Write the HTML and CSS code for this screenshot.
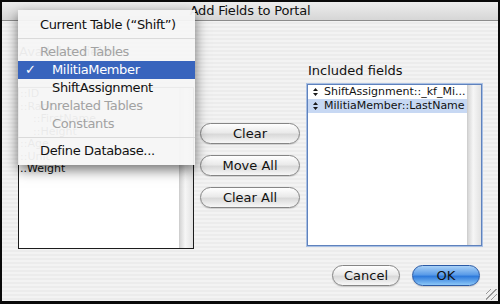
FILE: index.html
```html
<!DOCTYPE html>
<html lang="en">
<head>
    <meta charset="UTF-8">
    <title>Add Fields to Portal</title>
    <link rel="stylesheet" href="styles.css">
</head>
<body>
    <div class="window">
        <div class="titlebar">Add Fields to Portal</div>

        <div class="content">
            <div class="columns">
                <div class="col col-left">
                    <div class="label">Available fields</div>
                    <div class="popup">MilitiaMember</div>
                    <div class="list list-left">
                        <div class="list-rows">
                            <div class="row">::ID</div>
                            <div class="row">::Rank</div>
                            <div class="row indent">::FirstName</div>
                            <div class="row indent">::Height</div>
                            <div class="row">::Age</div>
                            <div class="row">::Unit</div>
                            <div class="row">..Weight</div>
                        </div>
                        <div class="scroll"></div>
                    </div>
                </div>

                <div class="col col-mid">
                    <button class="pill">Clear</button>
                    <button class="pill">Move All</button>
                    <button class="pill">Clear All</button>
                </div>

                <div class="col col-right">
                    <div class="label">Included fields</div>
                    <div class="list list-right">
                        <div class="list-rows">
                            <div class="row">
                                <svg class="updown" width="5" height="8" viewBox="0 0 5 8"><path d="M2.5 0 L5 3 L0 3 Z M0 5 L5 5 L2.5 8 Z" fill="#1a1a1a"/></svg>ShiftAssignment::_kf_Mi...
                            </div>
                            <div class="row selected">
                                <svg class="updown" width="5" height="8" viewBox="0 0 5 8"><path d="M2.5 0 L5 3 L0 3 Z M0 5 L5 5 L2.5 8 Z" fill="#1a1a1a"/></svg>MilitiaMember::LastName
                            </div>
                        </div>
                        <div class="scroll"></div>
                    </div>
                </div>
            </div>

            <div class="footer">
                <button class="pill pill-wide">Cancel</button>
                <button class="pill pill-wide default">OK</button>
            </div>
        </div>

        <div class="grip"></div>

        <!-- open table popup -->
        <div class="menu">
            <div class="item">Current Table (“Shift”)</div>
            <div class="sep"></div>
            <div class="item header">Related Tables</div>
            <div class="item sub active"><span class="check">✓</span>MilitiaMember</div>
            <div class="item sub">ShiftAssignment</div>
            <div class="item header">Unrelated Tables</div>
            <div class="item sub disabled">Constants</div>
            <div class="sep"></div>
            <div class="item">Define Database...</div>
        </div>
    </div>
</body>
</html>
```

FILE: styles.css
```css
* {
    margin: 0;
    padding: 0;
    box-sizing: border-box;
}

body {
    font-family: "DejaVu Sans", "Liberation Sans", sans-serif;
    font-size: 13px;
    color: #111;
    background: #000;
    width: 500px;
    height: 304px;
    overflow: hidden;
}

.window {
    position: relative;
    width: 500px;
    height: 304px;
    border: 2px solid #0a0a0a;
    border-bottom-width: 3px;
    background: repeating-linear-gradient(to bottom, #ececec 0, #ececec 2px, #f3f3f3 2px, #f3f3f3 4px);
    display: flex;
    flex-direction: column;
}

.titlebar {
    height: 19px;
    line-height: 18px;
    text-align: center;
    font-size: 13px;
    letter-spacing: -0.2px;
    background: linear-gradient(to bottom, #ededed, #d6d6d6);
    border-bottom: 1px solid #8c8c8c;
}

.content {
    flex: 1;
    display: flex;
    flex-direction: column;
    padding: 0 16px 0 16px;
}

.columns {
    display: flex;
    gap: 6px;
}

.col {
    display: flex;
    flex-direction: column;
}

.col-left {
    width: 176px;
}

.col-mid {
    width: 100px;
    padding-top: 102px;
    gap: 11px;
}

.col-right {
    width: 175px;
    margin-left: 1px;
    padding-top: 42px;
}

.label {
    height: 21px;
    line-height: 16px;
    padding-left: 1px;
}

.col-left .label {
    margin-top: 23px;
}

.popup {
    height: 19px;
    margin-bottom: 3px;
}

.list {
    position: relative;
    height: 162px;
    background: #fff;
    display: flex;
}

.list-left {
    border: 1px solid #1c1c1c;
}

.list-right {
    border: 1px solid #5f82bd;
    box-shadow: 0 0 0 1px #a8bfe3;
}

.list-rows {
    flex: 1;
    font-size: 11px;
}

.list-left .row {
    height: 12.5px;
    line-height: 12.5px;
    padding-left: 1px;
}

.list-left .row.indent {
    padding-left: 14px;
}

.row {
    height: 14px;
    line-height: 14px;
    padding-left: 4px;
    white-space: nowrap;
    overflow: hidden;
}

.row.selected {
    background: #c7d8f3;
}

.updown {
    margin: 0 6px 0 1px;
    vertical-align: -1px;
}

.scroll {
    width: 14px;
    background: linear-gradient(to right, #d6d6d6, #f6f6f6 40%, #e2e2e2);
    border-left: 1px solid #cfcfcf;
}

.pill {
    height: 21px;
    border: 1px solid #858585;
    border-radius: 11px;
    background: linear-gradient(to bottom, #ffffff, #eaeaea 45%, #d9d9d9 55%, #f7f7f7);
    font-family: inherit;
    font-size: 13px;
    color: #111;
    box-shadow: 0 1px 1px rgba(0,0,0,0.15);
}

.footer {
    display: flex;
    justify-content: flex-end;
    gap: 12px;
    padding-top: 16px;
    padding-right: 2px;
}

.pill-wide {
    width: 68px;
}

.pill.default {
    border-color: #2b5aa5;
    background: linear-gradient(to bottom, #a9d1f7, #5b9ce8 45%, #2f7bdc 55%, #8cc7f7);
}

.grip {
    position: absolute;
    right: 1px;
    bottom: 1px;
    width: 11px;
    height: 11px;
    background: repeating-linear-gradient(135deg, transparent 0, transparent 3px, #9a9a9a 3px, #9a9a9a 4px);
}

.menu {
    position: absolute;
    left: 16px;
    top: 8px;
    width: 177px;
    padding: 6px 0 5px;
    background: rgba(246,246,246,0.95);
    box-shadow: 0 5px 12px rgba(0,0,0,0.55);
    letter-spacing: -0.35px;
}

.item {
    position: relative;
    height: 18px;
    line-height: 18px;
    padding-left: 22px;
    white-space: nowrap;
}

.item.sub {
    padding-left: 34px;
}

.item.header,
.item.disabled {
    color: #a2a2a2;
}

.item.active {
    background: #3864bd;
    color: #fff;
}

.check {
    position: absolute;
    left: 7px;
}

.sep {
    height: 5px;
    border-bottom: 1px solid #dadada;
    margin-bottom: 4px;
}
```
